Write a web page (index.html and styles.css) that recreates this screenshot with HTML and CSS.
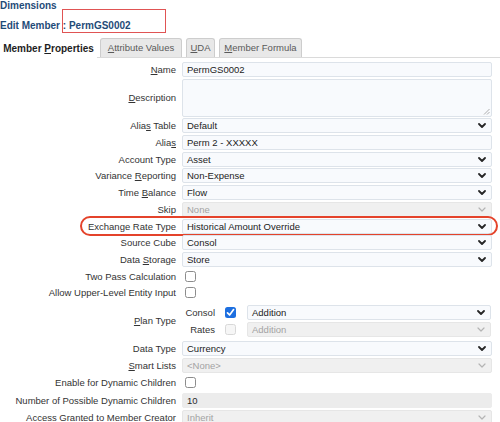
FILE: index.html
```html
<!DOCTYPE html>
<html>
<head>
<meta charset="utf-8">
<link rel="stylesheet" href="styles.css">
</head>
<body>
<div class="hdr">
  <div class="title">Dimensions</div>
  <div class="edit">Edit Member : PermGS0002</div>
  <div class="mark"></div>
</div>
<div class="tabs">
  <div class="tab active">Member <u>P</u>roperties</div>
  <div class="tab t-attr"><u>A</u>ttribute Values</div>
  <div class="tab t-uda"><u>U</u>DA</div>
  <div class="tab t-form"><u>M</u>ember Formula</div>
</div>

<div class="form upper">
  <div class="row"><div class="lbl"><u>N</u>ame</div><div class="field">PermGS0002</div></div>
  <div class="row desc"><div class="lbl"><u>D</u>escription</div><div class="field area"><svg class="grip" width="7" height="7" viewBox="0 0 7 7"><path d="M1 6.5 L6.5 1 M4 6.5 L6.5 4" stroke="#999" stroke-width="0.8" fill="none"/></svg></div></div>
  <div class="row"><div class="lbl">Alia<u>s</u> Table</div><div class="field sel">Default<svg class="chev" viewBox="0 0 8 5"><path d="M1 1 L4 4 L7 1" /></svg></div></div>
  <div class="row"><div class="lbl">Alia<u>s</u></div><div class="field">Perm 2 - XXXXX</div></div>
  <div class="row"><div class="lbl">Account Type</div><div class="field sel">Asset<svg class="chev" viewBox="0 0 8 5"><path d="M1 1 L4 4 L7 1" /></svg></div></div>
  <div class="row"><div class="lbl">Variance <u>R</u>eporting</div><div class="field sel">Non-Expense<svg class="chev" viewBox="0 0 8 5"><path d="M1 1 L4 4 L7 1" /></svg></div></div>
  <div class="row"><div class="lbl">Time <u>B</u>alance</div><div class="field sel">Flow<svg class="chev" viewBox="0 0 8 5"><path d="M1 1 L4 4 L7 1" /></svg></div></div>
  <div class="row"><div class="lbl">Skip</div><div class="field sel dis">None<svg class="chev" viewBox="0 0 8 5"><path d="M1 1 L4 4 L7 1" /></svg></div></div>
  <div class="row hl"><div class="lbl">Exchange Rate Type</div><div class="field sel">Historical Amount Override<svg class="chev" viewBox="0 0 8 5"><path d="M1 1 L4 4 L7 1" /></svg></div><div class="oval"></div></div>
  <div class="row"><div class="lbl">Source Cube</div><div class="field sel">Consol<svg class="chev" viewBox="0 0 8 5"><path d="M1 1 L4 4 L7 1" /></svg></div></div>
  <div class="row"><div class="lbl">Data <u>S</u>torage</div><div class="field sel">Store<svg class="chev" viewBox="0 0 8 5"><path d="M1 1 L4 4 L7 1" /></svg></div></div>
  <div class="row"><div class="lbl">Two Pass Calculation</div><div class="cbwrap"><span class="cb"></span></div></div>
  <div class="row"><div class="lbl">Allow Upper-Level Entity Input</div><div class="cbwrap"><span class="cb"></span></div></div>
</div>

<div class="row plan">
  <div class="lbl"><u>P</u>lan Type</div>
  <div class="plangrid">
    <div class="plbl">Consol</div>
    <span class="cb on"><svg viewBox="0 0 11 11" width="11" height="11"><path d="M2.5 5.8 L4.6 8 L8.6 2.6" stroke="#fff" stroke-width="1.7" fill="none" stroke-linecap="round" stroke-linejoin="round"/></svg></span>
    <div class="field sel">Addition<svg class="chev" viewBox="0 0 8 5"><path d="M1 1 L4 4 L7 1" /></svg></div>
    <div class="plbl">Rates</div>
    <span class="cb off"></span>
    <div class="field sel dis">Addition<svg class="chev" viewBox="0 0 8 5"><path d="M1 1 L4 4 L7 1" /></svg></div>
  </div>
</div>

<div class="form lower">
  <div class="row"><div class="lbl">Data Type</div><div class="field sel">Currency<svg class="chev" viewBox="0 0 8 5"><path d="M1 1 L4 4 L7 1" /></svg></div></div>
  <div class="row"><div class="lbl"><u>S</u>mart Lists</div><div class="field sel dis">&lt;None&gt;<svg class="chev" viewBox="0 0 8 5"><path d="M1 1 L4 4 L7 1" /></svg></div></div>
  <div class="row"><div class="lbl">Enable for Dynamic Children</div><div class="cbwrap"><span class="cb"></span></div></div>
  <div class="row"><div class="lbl">Number of Possible Dynamic Children</div><div class="field ro">10</div></div>
  <div class="row"><div class="lbl">Access Granted to Member Creator</div><div class="field sel dis">Inherit<svg class="chev" viewBox="0 0 8 5"><path d="M1 1 L4 4 L7 1" /></svg></div></div>
</div>
</body>
</html>
```

FILE: styles.css
```css
html, body {
  margin: 0;
  padding: 0;
}
body {
  width: 500px;
  height: 422px;
  overflow: hidden;
  background: #fff;
  font-family: "Liberation Sans", Arial, sans-serif;
  font-size: 9.5px;
  color: #333;
}
u {
  text-decoration: underline;
  text-underline-offset: 1px;
}

/* header */
.hdr {
  position: relative;
  height: 38px;
}
.title,
.edit {
  font-size: 10px;
  font-weight: bold;
  line-height: 12px;
  color: #1f4b78;
}
.edit {
  margin-top: 8px;
}
.mark {
  position: absolute;
  left: 62px;
  top: 9px;
  width: 104px;
  height: 24px;
  box-sizing: border-box;
  border: 1.5px solid #e05454;
}

/* tabs */
.tabs {
  display: flex;
  align-items: flex-end;
  height: 19px;
  border-bottom: 1px solid #dadada;
}
.tab {
  box-sizing: border-box;
  height: 19px;
  line-height: 18px;
  text-align: center;
  border: 1px solid #cdcdcd;
  border-bottom: none;
  border-radius: 3px 3px 0 0;
  background: #e8e8e8;
  color: #5a5a5a;
  margin-right: 4px;
  white-space: nowrap;
}
.tab.active {
  width: 97px;
  height: 20px;
  margin-bottom: -1px;
  margin-right: 3px;
  background: #fff;
  border-color: #fff;
  color: #1e1e1e;
  font-weight: bold;
  font-size: 10px;
  line-height: 19px;
}
.t-attr { width: 82px; }
.t-uda { width: 29px; }
.t-form { width: 83px; }

/* form */
.form {
  display: flex;
  flex-direction: column;
}
.upper {
  padding-top: 4px;
  gap: 1.7px;
}
.lower {
  margin-top: 4px;
  gap: 2.3px;
}
.row {
  position: relative;
  display: grid;
  grid-template-columns: 176px 310px;
  column-gap: 6px;
  align-items: center;
  min-height: 15px;
}
.lbl {
  text-align: right;
  line-height: 15px;
  white-space: nowrap;
  color: #333;
}
.field {
  position: relative;
  box-sizing: border-box;
  height: 15px;
  line-height: 13px;
  padding: 0 4px;
  border: 1px solid #dde3ea;
  border-radius: 2px;
  background: #f8fafd;
  color: #222;
  white-space: nowrap;
}
.desc .field.area {
  height: 38px;
}
.grip {
  position: absolute;
  right: 1px;
  bottom: 1px;
}
.chev {
  position: absolute;
  right: 5px;
  top: 4px;
  width: 8px;
  height: 5px;
}
.chev path {
  fill: none;
  stroke: #262626;
  stroke-width: 1.8;
  stroke-linecap: round;
  stroke-linejoin: round;
}
.field.dis {
  background: #f0f0f0;
  border-color: #e6e6e6;
  color: #a3a3a3;
}
.field.dis .chev path {
  stroke: #b4b4b4;
  stroke-width: 1.2;
}
.field.ro {
  background: #ececec;
  border-color: #ececec;
  color: #2a2a2a;
}
.hl .oval {
  position: absolute;
  left: 80px;
  right: 2px;
  top: -2.5px;
  bottom: -2.5px;
  border: 2px solid #e4432b;
  border-radius: 11px;
  pointer-events: none;
}

/* checkboxes */
.cbwrap {
  display: flex;
  align-items: center;
  height: 15px;
  padding-left: 3px;
}
.cb {
  display: block;
  box-sizing: border-box;
  width: 11px;
  height: 11px;
  border: 1px solid #8c8c8c;
  border-radius: 2.5px;
  background: #fff;
}
.cb.on {
  border: none;
  background: #1d6fe0;
}
.cb.on svg {
  display: block;
}
.cb.off {
  border-color: #d8d8d8;
  background: #f6f6f6;
}

/* plan type */
.plan {
  margin-top: 4.5px;
}
.plangrid {
  display: grid;
  grid-template-columns: 33px 11px 245px;
  column-gap: 10px;
  row-gap: 2px;
  align-items: center;
}
.plangrid .field {
  margin-left: 1px;
}
.plbl {
  text-align: right;
  line-height: 15px;
  color: #333;
}
```
